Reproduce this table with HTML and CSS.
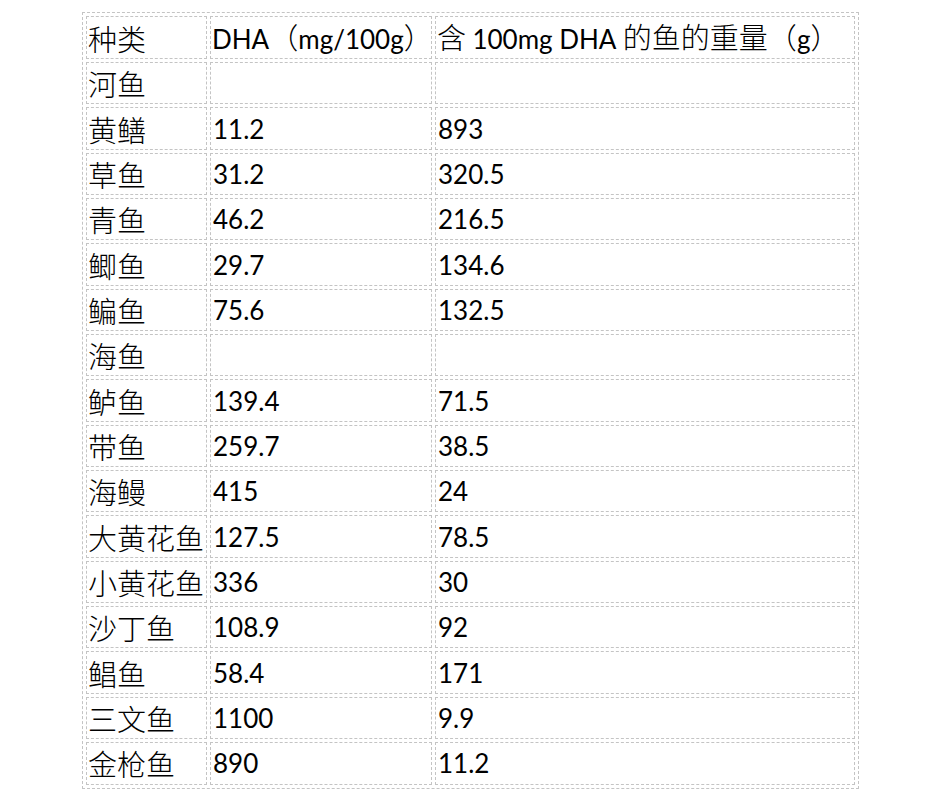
FILE: index.html
```html
<!DOCTYPE html>
<html lang="zh-CN">
<head>
<meta charset="utf-8">
<title>鱼类 DHA 含量</title>
<link rel="stylesheet" href="styles.css">
</head>
<body>
<div class="page">
<table class="dha">
  <tbody>
    <tr><td class="c1">种类</td><td class="c2"><span class="lat">DHA</span>（<span class="lat">mg/100g</span>）</td><td class="c3">含 <span class="lat">100mg DHA</span> 的鱼的重量（<span class="lat">g</span>）</td></tr>
    <tr><td>河鱼</td><td></td><td></td></tr>
    <tr><td>黄鳝</td><td class="lat">11.2</td><td class="lat">893</td></tr>
    <tr><td>草鱼</td><td class="lat">31.2</td><td class="lat">320.5</td></tr>
    <tr><td>青鱼</td><td class="lat">46.2</td><td class="lat">216.5</td></tr>
    <tr><td>鲫鱼</td><td class="lat">29.7</td><td class="lat">134.6</td></tr>
    <tr><td>鳊鱼</td><td class="lat">75.6</td><td class="lat">132.5</td></tr>
    <tr><td>海鱼</td><td></td><td></td></tr>
    <tr><td>鲈鱼</td><td class="lat">139.4</td><td class="lat">71.5</td></tr>
    <tr><td>带鱼</td><td class="lat">259.7</td><td class="lat">38.5</td></tr>
    <tr><td>海鳗</td><td class="lat">415</td><td class="lat">24</td></tr>
    <tr><td>大黄花鱼</td><td class="lat">127.5</td><td class="lat">78.5</td></tr>
    <tr><td>小黄花鱼</td><td class="lat">336</td><td class="lat">30</td></tr>
    <tr><td>沙丁鱼</td><td class="lat">108.9</td><td class="lat">92</td></tr>
    <tr><td>鲳鱼</td><td class="lat">58.4</td><td class="lat">171</td></tr>
    <tr><td>三文鱼</td><td class="lat">1100</td><td class="lat">9.9</td></tr>
    <tr><td>金枪鱼</td><td class="lat">890</td><td class="lat">11.2</td></tr>
  </tbody>
</table>
</div>
</body>
</html>
```

FILE: styles.css
```css
html, body {
  margin: 0;
  padding: 0;
  background: #ffffff;
}

.page {
  padding: 12px 0 0 82px;
}

.dha {
  width: 777px;
  table-layout: fixed;
  border-collapse: separate;
  border-spacing: 3px;
  border: 1px dashed #c4c4c4;
  font-family: "Noto Sans CJK SC", sans-serif;
  font-weight: 300;
  font-size: 29px;
  color: #000;
}

.dha td {
  box-sizing: border-box;
  height: 42.35px;
  border: 1px dashed #c4c4c4;
  padding: 0 1px;
  vertical-align: middle;
  line-height: 38px;
  white-space: nowrap;
  overflow: hidden;
}

.dha .c1 { width: 121px; }
.dha .c2 { width: 222px; }
.dha .c3 { width: 420px; }

.lat {
  font-family: "Lato", "Noto Sans CJK SC", sans-serif;
  font-weight: 400;
  font-size: 26px;
}

td.lat {
  padding-left: 2px;
}
```
